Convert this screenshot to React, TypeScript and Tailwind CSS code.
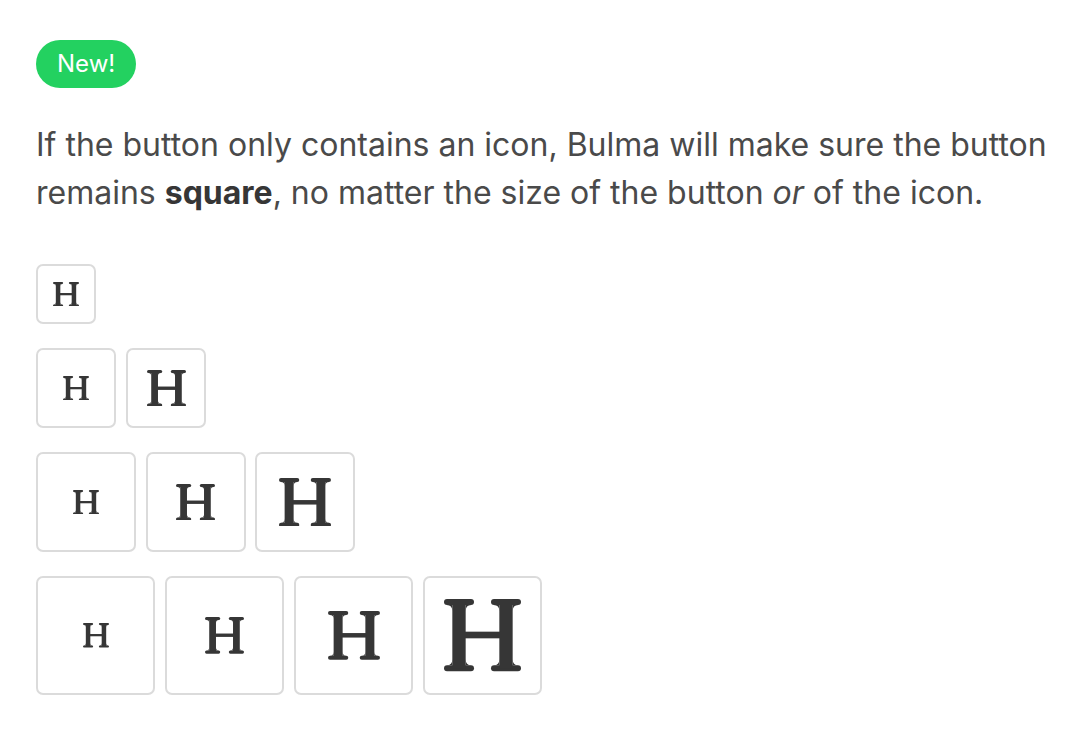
import React from 'react';

// Slab-serif "heading" glyph, drawn as an icon (left half mirrored for the right half).
function HeadingIcon({ width }: { width: number }) {
  const half = (
    <>
      <rect x="0" y="0" width="90" height="18" rx="9" />
      <rect x="0" y="199" width="90" height="18" rx="9" />
      <rect x="25" y="8" width="40" height="201" />
      <path d="M8 18 Q25 18 25 36 V18 Z M82 18 Q65 18 65 36 V18 Z M8 199 Q25 199 25 181 V199 Z M82 199 Q65 199 65 181 V199 Z" />
    </>
  );
  return (
    <svg width={width} height={(width * 217) / 231} viewBox="0 0 231 217" fill="#363636" aria-hidden="true">
      {half}
      <g transform="translate(231 0) scale(-1 1)">{half}</g>
      <rect x="60" y="98" width="111" height="20" />
    </svg>
  );
}

const ICON_SIZES = { small: 26, normal: 39, medium: 52, large: 77 };
type IconSize = keyof typeof ICON_SIZES;

const BUTTON_CLASSES = {
  small: 'w-[60px] h-[60px]',
  normal: 'w-[80px] h-[80px]',
  medium: 'w-[100px] h-[100px]',
  large: 'w-[119px] h-[119px]',
};

function IconButton({ size, icon }: { size: keyof typeof BUTTON_CLASSES; icon: IconSize }) {
  return (
    <a
      className={`${BUTTON_CLASSES[size]} flex items-center justify-center bg-white border-2 border-[#dbdbdb] rounded-[7px] cursor-pointer`}
    >
      <HeadingIcon width={ICON_SIZES[icon]} />
    </a>
  );
}

export default function App() {
  return (
    <div className="min-h-[740px] bg-white px-[36px] pt-[40px] font-['Inter','Roboto',sans-serif]">
      <span className="inline-flex items-center h-[48px] px-[21px] rounded-full bg-[#23d160] text-white text-[24px] leading-none">
        New!
      </span>

      <p className="mt-[33px] text-[32px] leading-[48px] text-[#4a4a4a] whitespace-nowrap">
        If the button only contains an icon, Bulma will make sure the button
        <br />
        remains <strong className="font-bold text-[#363636]">square</strong>, no matter the size of the button{' '}
        <em>or</em> of the icon.
      </p>

      <div className="mt-[47px] flex flex-col gap-[24px]">
        <div className="flex gap-[10px]">
          <IconButton size="small" icon="small" />
        </div>
        <div className="flex gap-[10px]">
          <IconButton size="normal" icon="small" />
          <IconButton size="normal" icon="normal" />
        </div>
        <div className="flex gap-[9.5px]">
          <IconButton size="medium" icon="small" />
          <IconButton size="medium" icon="normal" />
          <IconButton size="medium" icon="medium" />
        </div>
        <div className="flex gap-[10px]">
          <IconButton size="large" icon="small" />
          <IconButton size="large" icon="normal" />
          <IconButton size="large" icon="medium" />
          <IconButton size="large" icon="large" />
        </div>
      </div>
    </div>
  );
}
